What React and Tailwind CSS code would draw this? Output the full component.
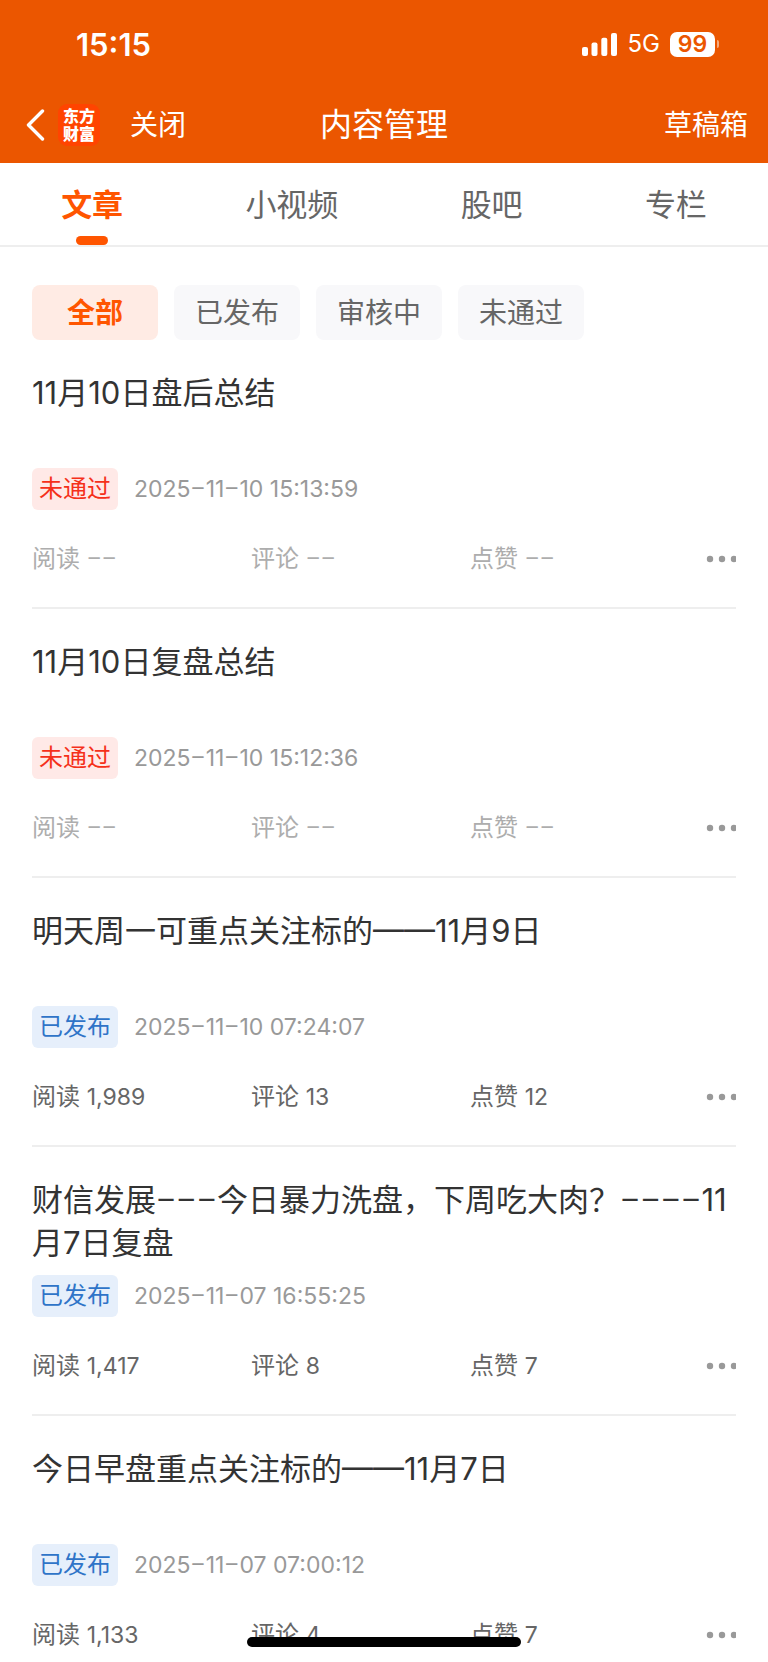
import { useState } from "react";

const TABS = ["文章", "小视频", "股吧", "专栏"];

const FILTERS = ["全部", "已发布", "审核中", "未通过"];

const ARTICLES = [
  { id: 1, title: "11月10日盘后总结", status: "rejected", time: "2025–11–10 15:13:59" },
  { id: 2, title: "11月10日复盘总结", status: "rejected", time: "2025–11–10 15:12:36" },
  { id: 3, title: "明天周一可重点关注标的——11月9日", status: "published", time: "2025–11–10 07:24:07", reads: "1,989", comments: "13", likes: "12" },
  { id: 4, title: "财信发展–––今日暴力洗盘，下周吃大肉？––––11月7日复盘", status: "published", time: "2025–11–07 16:55:25", reads: "1,417", comments: "8", likes: "7" },
  { id: 5, title: "今日早盘重点关注标的——11月7日", status: "published", time: "2025–11–07 07:00:12", reads: "1,133", comments: "4", likes: "7" },
];

const STATUS = {
  rejected: { label: "未通过", badge: "bg-[#ffe9e7] text-[#f5301a]", stats: "text-[#adadad]" },
  published: { label: "已发布", badge: "bg-[#e6effb] text-[#2f74c8]", stats: "text-[#666666]" },
};

// Inter's en dashes touch each other, Roboto's keep a gap
function DashedText({ text }) {
  return text.split(/(–+|\d+)/).map((part, i) =>
    part.startsWith("–") ? <span key={i} className="font-['Roboto',sans-serif] leading-none">{part}</span> : part
  );
}

function StatusBar() {
  return (
    <div className="flex h-[88px] items-center justify-between pl-[76px] pr-[49px]">
      <span className="text-[31px] leading-none font-semibold">15:15</span>
      <div className="flex items-center gap-[10px]">
        <svg className="h-[23px] w-[36px]" viewBox="0 0 36 23" fill="currentColor" aria-hidden="true">
          <rect x="0" y="14" width="6" height="9" rx="2" />
          <rect x="9.5" y="9.5" width="6" height="13.5" rx="2" />
          <rect x="19.3" y="4.7" width="6" height="18.3" rx="2" />
          <rect x="29" y="0" width="6" height="23" rx="2" />
        </svg>
        <span className="text-[24px] leading-none">5G</span>
        <div className="flex items-center gap-[2px]">
          <span className="flex h-[25px] w-[45px] items-center justify-center rounded-[7px] bg-white text-[23px] leading-none font-semibold text-[#eb5600]">
            99
          </span>
          <span className="h-2 w-[2px] rounded-r-full bg-white/50" />
        </div>
      </div>
    </div>
  );
}

function NavBar() {
  return (
    <div className="grid h-[73px] grid-cols-[1fr_auto_1fr] items-center px-5">
      <div className="flex items-center pl-[6px]">
        <button type="button" aria-label="返回">
          <svg className="h-[32px] w-[20px]" viewBox="0 0 20 32" fill="none" stroke="currentColor" strokeWidth="3.4" strokeLinecap="round" strokeLinejoin="round">
            <path d="M16.5 2 L2.5 16 L16.5 30" />
          </svg>
        </button>
        <span className="ml-3 flex h-[42px] w-[42px] flex-col items-center justify-center rounded-[9px] bg-[#ff4400] text-[16px] leading-[18px] font-black">
          <span>东方</span>
          <span>财富</span>
        </span>
        <button type="button" className="ml-[30px] text-[28px] leading-none">关闭</button>
      </div>
      <h1 className="text-[32px] leading-none">内容管理</h1>
      <a href="#drafts" className="justify-self-end text-[28px] leading-none">草稿箱</a>
    </div>
  );
}

function ArticleItem({ article }) {
  const status = STATUS[article.status];
  const stats = [
    ["阅读", article.reads],
    ["评论", article.comments],
    ["点赞", article.likes],
  ];

  return (
    <li className="border-b-2 border-[#eeeeee] pt-[31px]">
      <h2 className="min-h-[86px] text-[31px] leading-[43px] text-[#333333]">
        <DashedText text={article.title} />
      </h2>
      <div className="mt-[11px] flex items-center gap-4">
        <span className={`flex h-[42px] items-center rounded-[6px] px-[7px] text-[24px] ${status.badge}`}>
          {status.label}
        </span>
        <time className="text-[23px] text-[#999999]">
          <DashedText text={article.time} />
        </time>
      </div>
      <div className={`flex h-[97px] items-center text-[24px] ${status.stats}`}>
        {stats.map(([label, value]) => (
          <span key={label} className="flex-1">
            {label}{" "}
            <span className="text-[23px] leading-none">
              <DashedText text={value ?? "––"} />
            </span>
          </span>
        ))}
        <button type="button" aria-label="更多" className="flex w-[47px] justify-end text-[#999999]">
          <svg className="h-2 w-[30px]" viewBox="0 0 30 8" fill="currentColor">
            <circle cx="4" cy="4" r="3.2" />
            <circle cx="16" cy="4" r="3.2" />
            <circle cx="28" cy="4" r="3.2" />
          </svg>
        </button>
      </div>
    </li>
  );
}

function App() {
  const [tab, setTab] = useState("文章");
  const [filter, setFilter] = useState("全部");

  return (
    <div className="flex h-screen flex-col overflow-hidden bg-white font-['Inter','Noto_Sans_CJK_SC',sans-serif]">
      <header className="shrink-0 bg-[#eb5600] pb-[2px] text-white">
        <StatusBar />
        <NavBar />
      </header>

      {/* Content type tabs */}
      <nav className="flex h-[84px] shrink-0 justify-around border-b-2 border-[#eeeeee]">
        {TABS.map((name) => (
          <button
            key={name}
            type="button"
            onClick={() => setTab(name)}
            className={`relative text-[31px] leading-none ${tab === name ? "font-bold text-[#ff5500]" : "text-[#666666]"}`}
          >
            {name}
            {tab === name && (
              <span className="absolute bottom-0 left-1/2 h-[9px] w-8 -translate-x-1/2 rounded-full bg-[#ff5500]" />
            )}
          </button>
        ))}
      </nav>

      <main className="flex-1 overflow-y-auto px-8 [scrollbar-width:none]">
        {/* Review status filter */}
        <div className="flex gap-4 pt-[38px]">
          {FILTERS.map((name) => (
            <button
              key={name}
              type="button"
              onClick={() => setFilter(name)}
              className={`h-[55px] w-[126px] rounded-[8px] text-[28px] leading-none ${
                filter === name ? "bg-[#ffebe4] font-bold text-[#ff5500]" : "bg-[#f8f8fa] text-[#666666]"
              }`}
            >
              {name}
            </button>
          ))}
        </div>

        <ul>
          {ARTICLES.map((article) => (
            <ArticleItem key={article.id} article={article} />
          ))}
        </ul>
      </main>

      {/* Home indicator */}
      <div className="fixed bottom-[15px] left-1/2 h-[10px] w-[274px] -translate-x-1/2 rounded-full bg-black" />
    </div>
  );
}

export default App;
